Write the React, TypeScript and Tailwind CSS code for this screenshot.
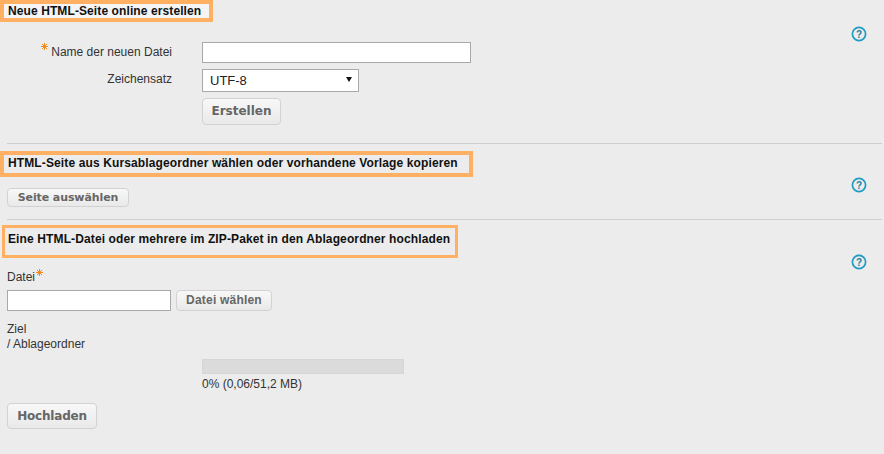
const Help = () => (
  <svg width="16" height="16" viewBox="0 0 16 16" className="block">
    <circle cx="8" cy="8" r="6.6" fill="none" stroke="#1f9bc4" strokeWidth="1.7" />
    <text x="8" y="11.5" textAnchor="middle" fontSize="10" fontWeight="700" fill="#1b7f9f" fontFamily="Liberation Sans, sans-serif">?</text>
  </svg>
);

const Btn = ({ children, className }: { children: string; className: string }) => (
  <button className={`rounded-[4px] border border-[#d2d2d2] bg-gradient-to-b from-[#f8f8f8] to-[#e9e9e9] font-bold text-[#666] ${className}`}>
    {children}
  </button>
);

const Star = ({ className }: { className: string }) => (
  <svg width="7" height="7" viewBox="0 0 7 7" className={className}>
    <path d="M3.5 0v7M0 3.5h7M1 1l5 5M6 1l-5 5" stroke="#f28a1c" strokeWidth="1" fill="none" />
  </svg>
);

export default function App() {
  return (
    <div className="h-[454px] w-[884px] overflow-hidden bg-[#ececec] font-['Liberation_Sans',Arial,sans-serif] text-[12px] leading-[15px] text-[#333]">
      {/* Section 1 */}
      <section className="relative h-[143px] pl-[7px]">
        <h2 className="ml-[-7px] box-border flex h-[22px] w-[213px] items-center whitespace-nowrap border-[4px] border-[#ffb062] bg-[#f5f5f5] pl-[4px] text-[12px] font-bold tracking-[0.1px] text-[#111]">
          Neue HTML-Seite online erstellen
        </h2>
        <div className="absolute right-[17px] top-[26px]"><Help /></div>
        <div className="mt-[20px] flex">
          <div className="flex w-[195px] flex-col items-end pr-[30px]">
            <div className="relative flex h-[27px] items-start pt-[3px]">
              <Star className="absolute left-[-10px] top-[1px]" />
              <span>Name der neuen Datei</span>
            </div>
            <div className="flex h-[27px] items-start pt-[3px]">Zeichensatz</div>
          </div>
          <div className="flex flex-col items-start">
            <div className="box-border h-[21px] w-[269px] border border-[#a9a9a9] bg-white" />
            <div className="relative mt-[6px] box-border flex h-[23px] w-[157px] items-center border border-[#a9a9a9] bg-white pl-[7px] text-[13px] text-[#222]">
              UTF-8
              <svg width="6" height="5" viewBox="0 0 6 5" className="absolute right-[6px] top-[7px]"><path d="M0 0h6L3 5z" fill="#111" /></svg>
            </div>
            <Btn className="mt-[6px] h-[27px] w-[79px] font-['DejaVu_Sans',sans-serif] text-[12px]">Erstellen</Btn>
          </div>
        </div>
      </section>

      {/* Section 2 */}
      <section className="relative ml-[7px] mr-[2px] h-[76px] border-t border-[#cfcfcf]">
        <h2 className="ml-[-7px] mt-[7px] box-border flex h-[26px] w-[473px] items-center whitespace-nowrap border-[4px] border-[#ffb062] pb-[1px] pl-[4px] font-bold tracking-[0.12px] text-[#111]">
          HTML-Seite aus Kursablageordner wählen oder vorhandene Vorlage kopieren
        </h2>
        <div className="absolute right-[15px] top-[33px]"><Help /></div>
        <Btn className="mt-[11px] block h-[19px] w-[122px] font-['DejaVu_Sans',sans-serif] text-[11px] tracking-[-0.1px]">Seite auswählen</Btn>
      </section>

      {/* Section 3 */}
      <section className="relative ml-[7px] mr-[2px] border-t border-[#cfcfcf]">
        <h2 className="ml-[-5px] mt-[5px] box-border h-[33px] w-[456px] whitespace-nowrap border-[3px] border-[#ffb062] pl-[3px] pt-[4px] font-bold tracking-[0.12px] text-[#111]">
          Eine HTML-Datei oder mehrere im ZIP-Paket in den Ablageordner hochladen
        </h2>
        <div className="absolute right-[15px] top-[34px]"><Help /></div>
        <div className="relative mt-[12px] h-[15px]">
          Datei<Star className="absolute left-[29px] top-[-1px]" />
        </div>
        <div className="mt-[5px] flex items-start gap-[5px]">
          <div className="box-border h-[21px] w-[164px] border border-[#a9a9a9] bg-white" />
          <Btn className="h-[21px] w-[96px] text-[12px] tracking-[0.2px]">Datei wählen</Btn>
        </div>
        <div className="mt-[11px]">Ziel</div>
        <div>/ Ablageordner</div>
        <div className="ml-[195px] mt-[7px]">
          <div className="h-[15px] w-[202px] border border-[#d6d6d6] bg-[#dbdbdb]" />
          <div className="mt-[3px]">0% (0,06/51,2 MB)</div>
        </div>
        <Btn className="mt-[11px] block h-[26px] w-[90px] font-['DejaVu_Sans',sans-serif] text-[12px] tracking-[-0.2px]">Hochladen</Btn>
      </section>
    </div>
  );
}
